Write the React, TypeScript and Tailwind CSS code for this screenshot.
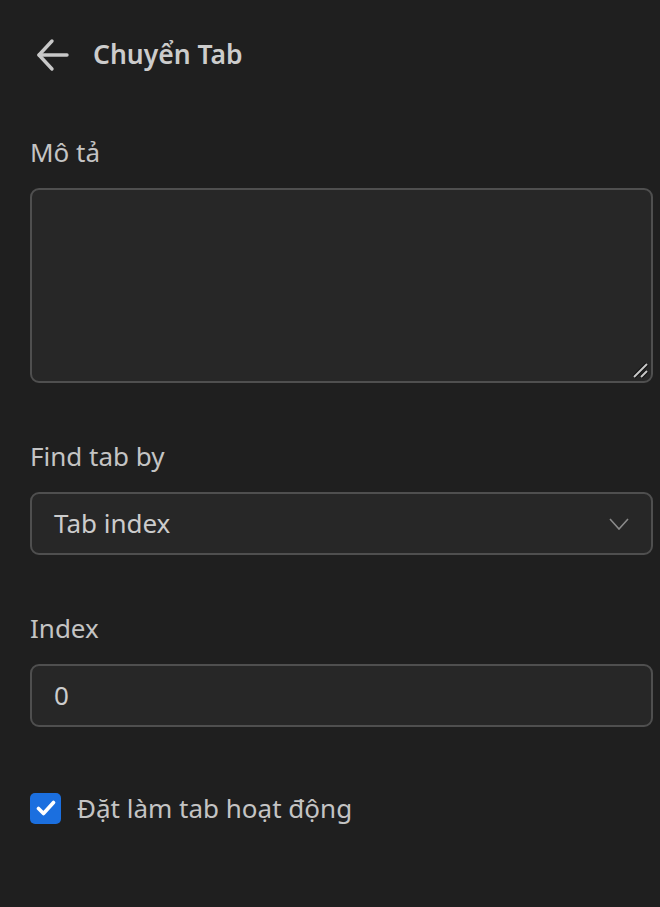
import React from "react";

export default function App() {
  const font = { fontFamily: '"Noto Sans", "Open Sans", sans-serif' };
  return (
    <div className="min-h-[907px] w-[660px] bg-[#1f1f1f] text-[#c4c4c4]" style={font}>
      <div className="pl-[30px] pr-[7px] pt-[31px]">
        <div className="flex h-[48px] items-center">
          <svg width="34" height="34" viewBox="0 0 34 34" className="ml-[6px]" fill="none" stroke="#c8c8c8" strokeWidth="3.4" strokeLinecap="round" strokeLinejoin="round">
            <path d="M31 17H3" />
            <path d="M16 3L3 17l13 14" />
          </svg>
          <span className="ml-[23px] text-[26.5px] font-semibold text-[#cccccc]">Chuyển Tab</span>
        </div>

        <div className="mt-[57px] h-[32px] text-[26px] leading-[32px]">Mô tả</div>
        <div className="relative mt-[20px]">
          <textarea
            className="block h-[195px] w-full resize-none rounded-[9px] border-2 border-[#4f4f4f] bg-[#272727] px-[22px] py-[14px] text-[26px] text-[#d0d0d0] outline-none"
          />
          <svg width="18" height="18" viewBox="0 0 18 18" className="pointer-events-none absolute bottom-[3px] right-[3px]" fill="none" strokeLinecap="butt">
            <path d="M2 15L15 2" stroke="#111" strokeWidth="4" />
            <path d="M9 15L15 9" stroke="#111" strokeWidth="4" />
            <path d="M2 15L15 2" stroke="#c8c8c8" strokeWidth="2" />
            <path d="M9 15L15 9" stroke="#c8c8c8" strokeWidth="2" />
          </svg>
        </div>

        <div className="mt-[57px] h-[32px] text-[26px] leading-[32px]">Find tab by</div>
        <div className="mt-[20px] flex h-[63px] items-center justify-between rounded-[9px] border-2 border-[#4f4f4f] bg-[#272727] pl-[22px] pr-[22px]">
          <span className="text-[26px] text-[#cccccc]">Tab index</span>
          <svg width="20" height="12" viewBox="0 0 20 12" fill="none" stroke="#8a8a8a" strokeWidth="1.6">
            <path d="M1 1l9 10 9-10" />
          </svg>
        </div>

        <div className="mt-[57px] h-[32px] text-[26px] leading-[32px]">Index</div>
        <div className="mt-[20px] flex h-[63px] items-center rounded-[9px] border-2 border-[#4f4f4f] bg-[#272727] pl-[22px]">
          <span className="text-[26px] text-[#cccccc]">0</span>
        </div>

        <div className="mt-[65px] flex h-[32px] items-center">
          <div className="flex h-[31px] w-[31px] items-center justify-center rounded-[5px] bg-[#1b6fdf]">
            <svg width="20" height="16" viewBox="0 0 20 16" fill="none" stroke="#ffffff" strokeWidth="3.6" strokeLinecap="round" strokeLinejoin="round">
              <path d="M2.5 8.5l5 5L17.5 2.5" />
            </svg>
          </div>
          <span className="ml-[16px] text-[26px] text-[#c4c4c4]">Đặt làm tab hoạt động</span>
        </div>
      </div>
    </div>
  );
}
